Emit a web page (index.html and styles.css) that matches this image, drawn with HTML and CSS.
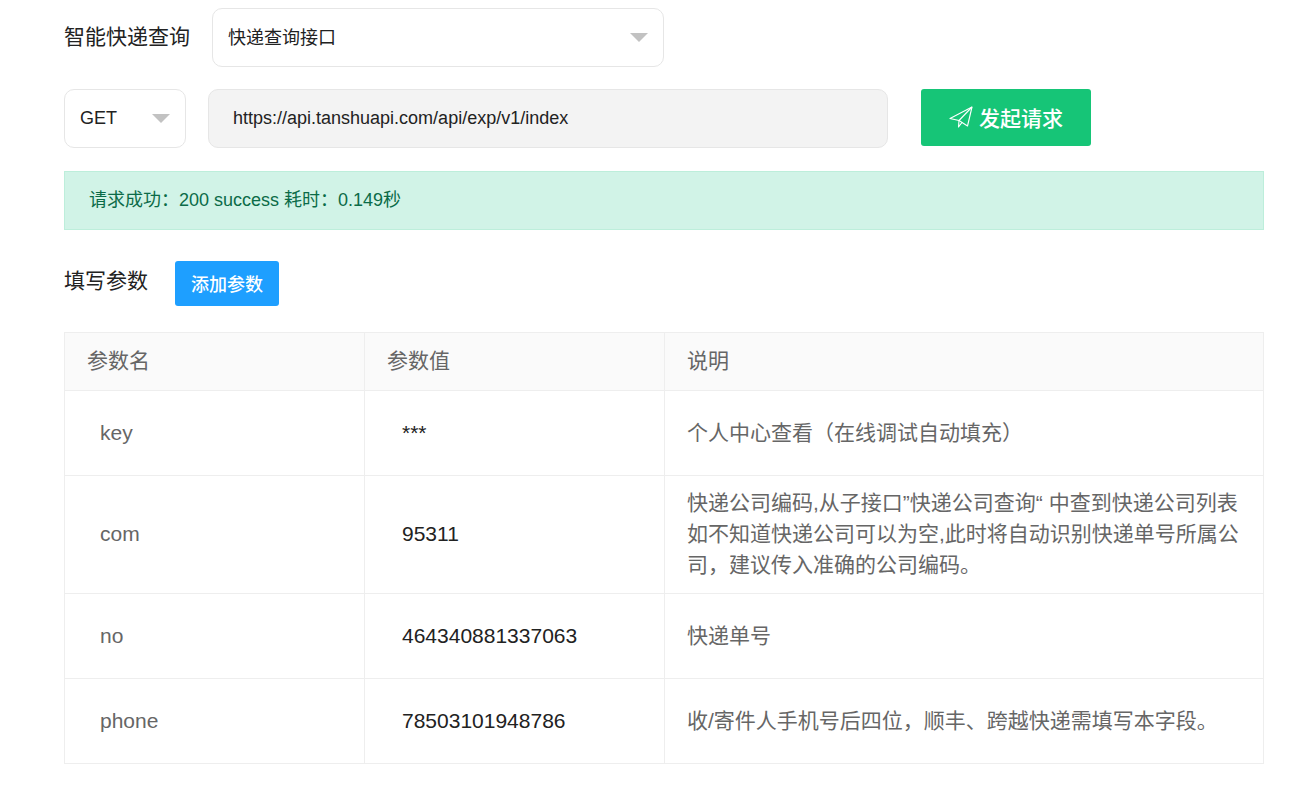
FILE: index.html
```html
<!DOCTYPE html>
<html lang="zh-CN">
 <head>
  <meta charset="utf-8">
  <title>智能快递查询</title>
  <link rel="stylesheet" href="styles.css">
 </head>
 <body>
  <div class="page">
   <div class="row api-row">
    <span class="api-title">智能快递查询</span>
    <div class="select api-select">快递查询接口<i class="caret"></i></div>
   </div>
   <div class="row url-row">
    <div class="select method-select">GET<i class="caret"></i></div>
    <div class="url-input">https://api.tanshuapi.com/api/exp/v1/index</div>
    <button class="btn btn-send" type="button">
     <svg class="send-icon" viewBox="0 0 24 24" width="24" height="24" fill="none" stroke="#fff" stroke-width="1.1" stroke-linejoin="round"><path d="M1 13.500 23 2 18.500 21 10 15.500Z"/><path d="M23 2 10 15.500 9.500 22 13 17.300"/></svg>发起请求
    </button>
   </div>
   <div class="alert">请求成功：200 success 耗时：0.149秒</div>
   <div class="param-head">
    <span class="param-title">填写参数</span>
    <button class="btn btn-add" type="button">添加参数</button>
   </div>
   <table class="param-table">
    <thead>
     <tr><th>参数名</th><th>参数值</th><th>说明</th></tr>
    </thead>
    <tbody>
     <tr class="row-short"><td class="name">key</td><td class="value">***</td><td>个人中心查看（在线调试自动填充）</td></tr>
     <tr><td class="name">com</td><td class="value">95311</td><td>快递公司编码,从子接口”快递公司查询“ 中查到快递公司列表如不知道快递公司可以为空,此时将自动识别快递单号所属公司，建议传入准确的公司编码。</td></tr>
     <tr class="row-short"><td class="name">no</td><td class="value">464340881337063</td><td>快递单号</td></tr>
     <tr class="row-short"><td class="name">phone</td><td class="value">78503101948786</td><td>收/寄件人手机号后四位，顺丰、跨越快递需填写本字段。</td></tr>
    </tbody>
   </table>
  </div>
 </body>
</html>
```

FILE: styles.css
```css
*{
  box-sizing: border-box;
}
body{
  margin: 0;
  background: #fff;
  color: #333;
  font-family: "Liberation Sans", "Noto Sans CJK SC", sans-serif;
  font-size: 18px;
}
.page{
  width: 1200px;
  margin-left: 64px;
  padding-top: 8px;
}
.row{
  display: flex;
}
.api-row{
  align-items: flex-start;
  gap: 22px;
}
.api-title{
  font-size: 21px;
  line-height: 58px;
  color: #222;
}
.select{
  position: relative;
  height: 59px;
  border: 1px solid #e6e6e6;
  border-radius: 10px;
  background: #fff;
  color: #222;
}
.api-select{
  width: 452px;
  padding-left: 15px;
  line-height: 59px;
}
.method-select{
  width: 122px;
  padding-left: 15px;
  line-height: 56px;
}
.caret{
  position: absolute;
  right: 15px;
  top: 24px;
  border-style: solid;
  border-width: 9px 9px 0;
  border-color: #c2c2c2 transparent transparent;
}
.url-row{
  margin-top: 22px;
}
.url-input{
  width: 680px;
  height: 59px;
  line-height: 56px;
  margin-left: 22px;
  padding-left: 24px;
  background: #f3f3f3;
  border: 1px solid #e6e6e6;
  border-radius: 10px;
  color: #222;
}
.btn{
  border: 0;
  border-radius: 3px;
  color: #fff;
  font-family: inherit;
  cursor: pointer;
}
.btn-send{
  display: flex;
  align-items: center;
  justify-content: center;
  gap: 6px;
  width: 170px;
  height: 57px;
  margin-left: 33px;
  padding-bottom: 2px;
  background: #16c577;
  font-size: 21px;
  font-weight: 500;
}
.alert{
  height: 59px;
  line-height: 56px;
  margin-top: 23px;
  padding-left: 24px;
  background: #d1f3e7;
  border: 1px solid #bdeedb;
  color: #0b6b48;
}
.param-head{
  display: flex;
  align-items: flex-start;
  margin-top: 31px;
}
.param-title{
  font-size: 21px;
  line-height: 40px;
  color: #222;
}
.btn-add{
  width: 104px;
  height: 45px;
  margin-left: 27px;
  padding-bottom: 2px;
  background: #1e9fff;
  font-size: 18px;
  font-weight: 500;
}
.param-table{
  width: 1200px;
  margin-top: 26px;
  border-collapse: collapse;
  table-layout: fixed;
  font-size: 21px;
  color: #666;
}
.param-table th,
.param-table td{
  border: 1px solid #eee;
  text-align: left;
  font-weight: normal;
}
.param-table th:nth-child(1),
.param-table th:nth-child(2){
  width: 300px;
}
.param-table th{
  height: 58px;
  padding: 0 22px 5px;
  background: #fafafa;
}
.param-table td{
  padding: 11px 22px 13px;
  line-height: 31px;
}
.row-short td{
  height: 85px;
}
.param-table .name{
  padding-left: 35px;
}
.param-table .value{
  padding-left: 37px;
  color: #222;
}
```
